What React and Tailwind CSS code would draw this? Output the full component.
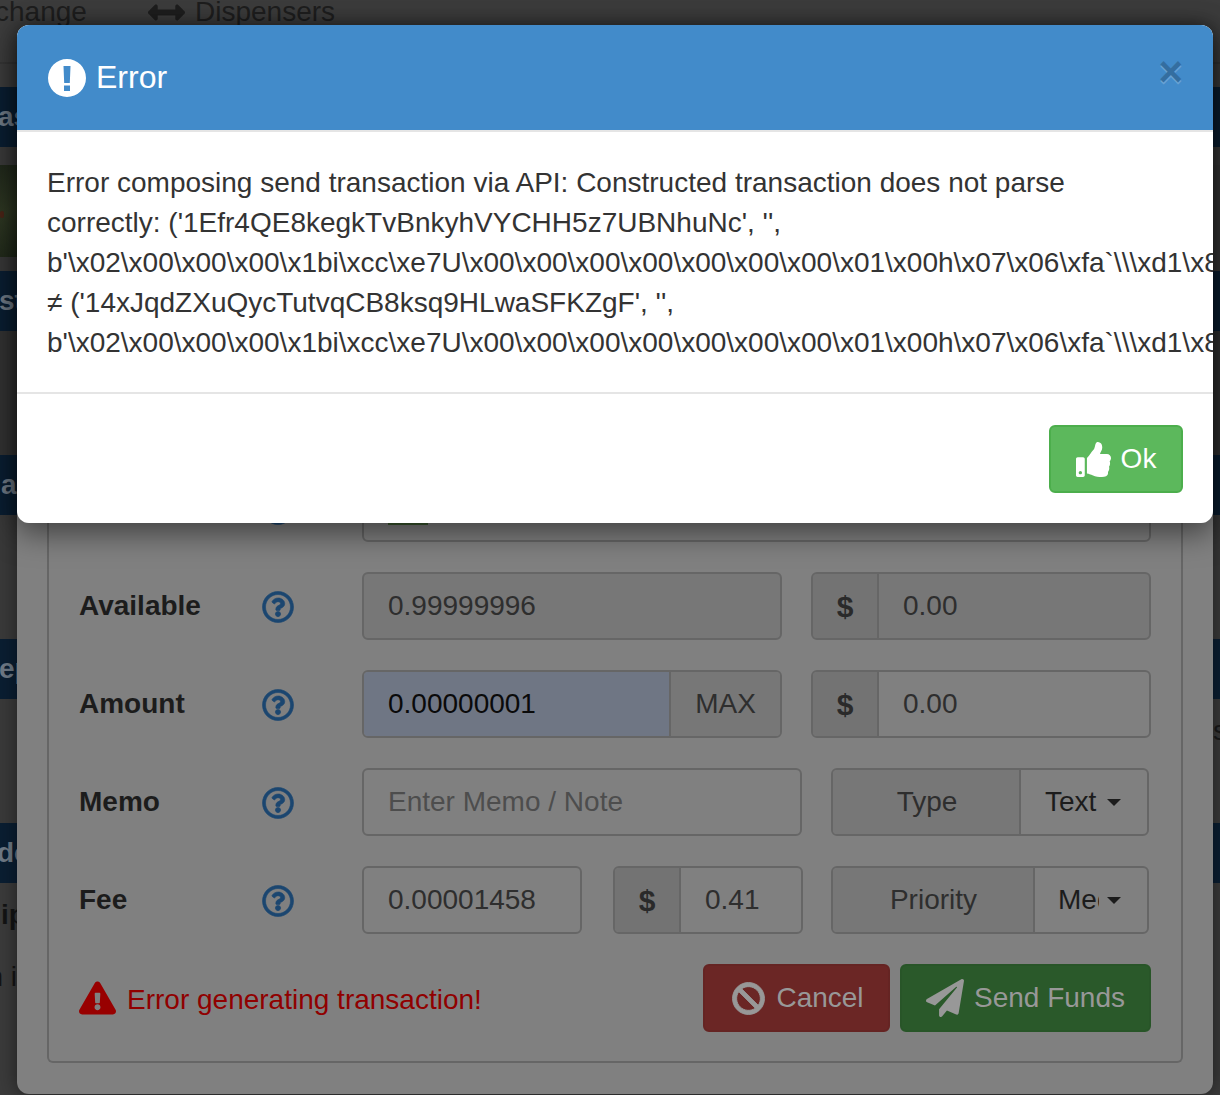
import React from "react";
import {
  FaArrowsAltH,
  FaRegQuestionCircle,
  FaThumbsUp,
  FaBan,
  FaPaperPlane,
  FaExclamationTriangle,
} from "react-icons/fa";

const HEX = String.raw`b'\x02\x00\x00\x00\x1bi\xcc\xe7U\x00\x00\x00\x00\x00\x00\x00\x01\x00h\x07\x06\xfa` + "`" + String.raw`\\\xd1\x8e\x00\x00`;

function Band({ text, textClass }) {
  return (
    <div className="h-[60px] bg-[#0a1e32] flex items-center text-[28px] font-bold text-[#6f7a86] overflow-hidden">
      <div className="w-[17px] overflow-hidden whitespace-nowrap">
        <span className={`block ${textClass}`}>{text}</span>
      </div>
    </div>
  );
}

function Background() {
  return (
    <div className="absolute inset-0 bg-[#383838] flex flex-col">
      <div className="h-[87px] flex flex-col bg-[#3c3c3c]">
        <div className="h-[64px] border-b-2 border-[#353535] text-[28px] text-[#1e1e1e] flex items-start leading-[24px] overflow-hidden">
          <span className="-ml-[5px] w-[153px] shrink-0">change</span>
          <FaArrowsAltH className="w-[37px] h-[37px] -mt-[6px] shrink-0 text-[#1e1e1e]" />
          <span className="ml-[10px]">Dispensers</span>
        </div>
      </div>
      <Band text="as" textClass="-ml-[2px]" />
      <div className="h-[124px] flex flex-col">
        <div className="h-[18px] bg-[#3a3a3a]"></div>
        <div className="h-[92px] w-[17px] bg-[linear-gradient(160deg,#20281b,#2f3823_50%,#20291a)] flex items-center">
          <div className="w-[4px] h-[7px] rounded-full bg-[#4a2416] mt-[6px]"></div>
        </div>
      </div>
      <Band text="st" textClass="-ml-[1px]" />
      <div className="h-[124px] bg-[#333333]"></div>
      <Band text="a" textClass="ml-[1px]" />
      <div className="h-[124px] bg-[#3a3a3a]"></div>
      <Band text="ep" textClass="-ml-[1px]" />
      <div className="h-[124px] bg-[#3a3a3a] flex justify-end">
        <span className="text-[28px] leading-[64px] text-[#1a1a1a] w-[7px] overflow-hidden">s</span>
      </div>
      <Band text="dc" textClass="-ml-[3px]" />
      <div className="flex-1 bg-[#3b3b3b] flex flex-col">
        <div className="w-[17px] overflow-hidden whitespace-nowrap text-[28px] font-bold text-[#141414] mt-[12px] leading-[40px] pl-[1px]">ip</div>
        <div className="w-[17px] overflow-hidden flex justify-end text-[28px] text-[#141414] mt-[22px] leading-[40px] whitespace-nowrap">n i</div>
      </div>
    </div>
  );
}

function Help() {
  return <FaRegQuestionCircle strokeWidth={10} className="w-[32px] h-[32px] mt-[2px] text-[#1b4670] shrink-0" />;
}

function Label({ children }) {
  return (
    <div className="w-[283px] shrink-0 flex items-center">
      <div className="w-[183px] text-[28px] font-bold text-[#1c1c1c]">{children}</div>
      <Help />
    </div>
  );
}

function Input({ className, children }) {
  return (
    <div className={`h-[68px] border-2 border-[#666] rounded-[6px] pl-[24px] flex items-center text-[28px] ${className}`}>
      {children}
    </div>
  );
}

function Dollar() {
  return (
    <div className="w-[66px] shrink-0 h-full bg-[#737373] border-r-2 border-[#666] text-[30px] font-bold text-[#2a2a2a] flex items-center justify-center">
      $
    </div>
  );
}

function Caret() {
  return <span className="w-0 h-0 border-x-[7px] border-x-transparent border-t-[7px] border-t-[#1c1c1c] shrink-0"></span>;
}

function LowerModal() {
  return (
    <div className="absolute left-[17px] top-[25px] w-[1196px] h-[1069px] bg-[#808080] rounded-[12px] shadow-[0_0_20px_rgba(0,0,0,0.5)] px-[30px] pb-[31px] flex flex-col">
      <div className="flex-1 border-2 border-t-0 border-[#666] rounded-[6px] pl-[30px] pr-[30px] pb-[29px] flex flex-col justify-end gap-[30px]">
        <div className="flex items-center h-[68px]">
          <Label></Label>
          <div className="w-[789px] h-[68px] border-2 border-[#666] rounded-[6px] pl-[24px]">
            <div className="w-[40px] h-[38px] mt-[11px] bg-[#3c5a30]"></div>
          </div>
        </div>

        <div className="flex items-center">
          <Label>Available</Label>
          <Input className="w-[420px] bg-[#777] text-[#2e2e2e]">0.99999996</Input>
          <div className="ml-[29px] w-[340px] h-[68px] border-2 border-[#666] rounded-[6px] overflow-hidden flex items-center text-[28px] bg-[#777] text-[#2e2e2e]">
            <Dollar />
            <span className="pl-[24px]">0.00</span>
          </div>
        </div>

        <div className="flex items-center">
          <Label>Amount</Label>
          <div className="w-[420px] h-[68px] border-2 border-[#666] rounded-[6px] overflow-hidden flex items-center text-[28px]">
            <div className="w-[307px] h-full bg-[#6f7684] text-[#0a0a0a] pl-[24px] flex items-center border-r-2 border-[#666]">0.00000001</div>
            <div className="flex-1 h-full bg-[#777] text-[#2e2e2e] flex items-center justify-center">MAX</div>
          </div>
          <div className="ml-[29px] w-[340px] h-[68px] border-2 border-[#666] rounded-[6px] overflow-hidden flex items-center text-[28px] text-[#2e2e2e]">
            <Dollar />
            <span className="pl-[24px]">0.00</span>
          </div>
        </div>

        <div className="flex items-center">
          <Label>Memo</Label>
          <Input className="w-[440px] text-[#4d4d4d]">Enter Memo / Note</Input>
          <div className="ml-[29px] w-[318px] h-[68px] border-2 border-[#666] rounded-[6px] overflow-hidden flex items-center text-[28px]">
            <div className="w-[188px] h-full bg-[#777] border-r-2 border-[#666] text-[#2e2e2e] pl-[2px] flex items-center justify-center">Type</div>
            <div className="flex-1 flex items-center text-[#1c1c1c] pl-[24px] gap-[11px]">
              <span>Text</span>
              <Caret />
            </div>
          </div>
        </div>

        <div className="flex items-center">
          <Label>Fee</Label>
          <Input className="w-[220px] text-[#2e2e2e]">0.00001458</Input>
          <div className="ml-[31px] w-[190px] h-[68px] border-2 border-[#666] rounded-[6px] overflow-hidden flex items-center text-[28px] text-[#2e2e2e]">
            <Dollar />
            <span className="pl-[24px]">0.41</span>
          </div>
          <div className="ml-[28px] w-[318px] h-[68px] border-2 border-[#666] rounded-[6px] overflow-hidden flex items-center text-[28px]">
            <div className="w-[202px] h-full bg-[#777] border-r-2 border-[#666] text-[#2e2e2e] pl-[1px] flex items-center justify-center">Priority</div>
            <div className="flex-1 flex items-center text-[#1c1c1c] pl-[23px] gap-[8px]">
              <span className="w-[41px] overflow-hidden whitespace-nowrap">Medium</span>
              <Caret />
            </div>
          </div>
        </div>

        <div className="flex items-center justify-between">
          <div className="flex items-center text-[28px] text-[#900000]">
            <FaExclamationTriangle className="w-[37px] h-[34px] text-[#980000] mr-[11px]" />
            <span className="mt-[4px]">Error generating transaction!</span>
          </div>
          <div className="flex items-center gap-[10px]">
            <div className="w-[187px] h-[68px] rounded-[6px] bg-[#6b2625] border-2 border-[#652423] text-[28px] text-[#989898] pl-[3px] flex items-center justify-center gap-[11px]">
              <FaBan strokeWidth={14} className="w-[33px] h-[33px]" />
              <span>Cancel</span>
            </div>
            <div className="w-[251px] h-[68px] rounded-[6px] bg-[#2a592a] border-2 border-[#285528] text-[28px] text-[#989898] flex items-center justify-center gap-[10px]">
              <FaPaperPlane className="w-[38px] h-[38px]" />
              <span>Send Funds</span>
            </div>
          </div>
        </div>
      </div>
    </div>
  );
}

function TopModal() {
  return (
    <div className="absolute left-[17px] top-[25px] w-[1196px] h-[498px] bg-white rounded-[12px] overflow-hidden flex flex-col">
      <div className="h-[107px] shrink-0 bg-[#428bca] border-b-2 border-[#e5e5e5] pl-[31px] pr-[30px] flex items-center justify-between">
        <div className="flex items-center gap-[10px] text-[32px] text-white">
          <svg viewBox="0 0 38 38" className="w-[38px] h-[38px]">
            <path
              fill="#fff"
              fillRule="evenodd"
              d="M19 0a19 19 0 1 0 0 38a19 19 0 0 0 0-38zM15.500 7h7l-.7 17h-5.600zM16 26.500h6V32h-6z"
            />
          </svg>
          <span className="-mt-[2px]">Error</span>
        </div>
        <span className="text-[42px] leading-[42px] font-bold text-black opacity-20 [text-shadow:0_2px_0_#fff] -mt-[12px] ml-[-2px] mr-[0px]">×</span>
      </div>
      <div className="px-[30px] pt-[31px] pb-[29px] h-[262px] shrink-0 text-[28px] leading-[40px] text-[#333] whitespace-nowrap border-b-2 border-[#e5e5e5]">
        <div>Error composing send transaction via API: Constructed transaction does not parse</div>
        <div>correctly: ('1Efr4QE8kegkTvBnkyhVYCHH5z7UBNhuNc', '',</div>
        <div>{HEX}</div>
        <div>≠ ('14xJqdZXuQycTutvqCB8ksq9HLwaSFKZgF', '',</div>
        <div>{HEX}</div>
      </div>
      <div className="flex-1 flex justify-end items-start pt-[31px] pr-[30px]">
        <div className="w-[134px] h-[68px] rounded-[6px] bg-[#5cb85c] border-2 border-[#4cae4c] text-[28px] text-white flex items-center justify-center gap-[10px]">
          <FaThumbsUp className="w-[35px] h-[35px]" />
          <span>Ok</span>
        </div>
      </div>
    </div>
  );
}

export default function App() {
  return (
    <div className="relative w-[1220px] h-[1095px] overflow-hidden font-['Liberation_Sans',Arial,sans-serif]">
      <Background />
      <LowerModal />
      <div className="absolute left-[17px] top-[25px] w-[1196px] h-[498px] rounded-[12px] shadow-[0_10px_30px_rgba(0,0,0,0.5)]"></div>
      <TopModal />
    </div>
  );
}
